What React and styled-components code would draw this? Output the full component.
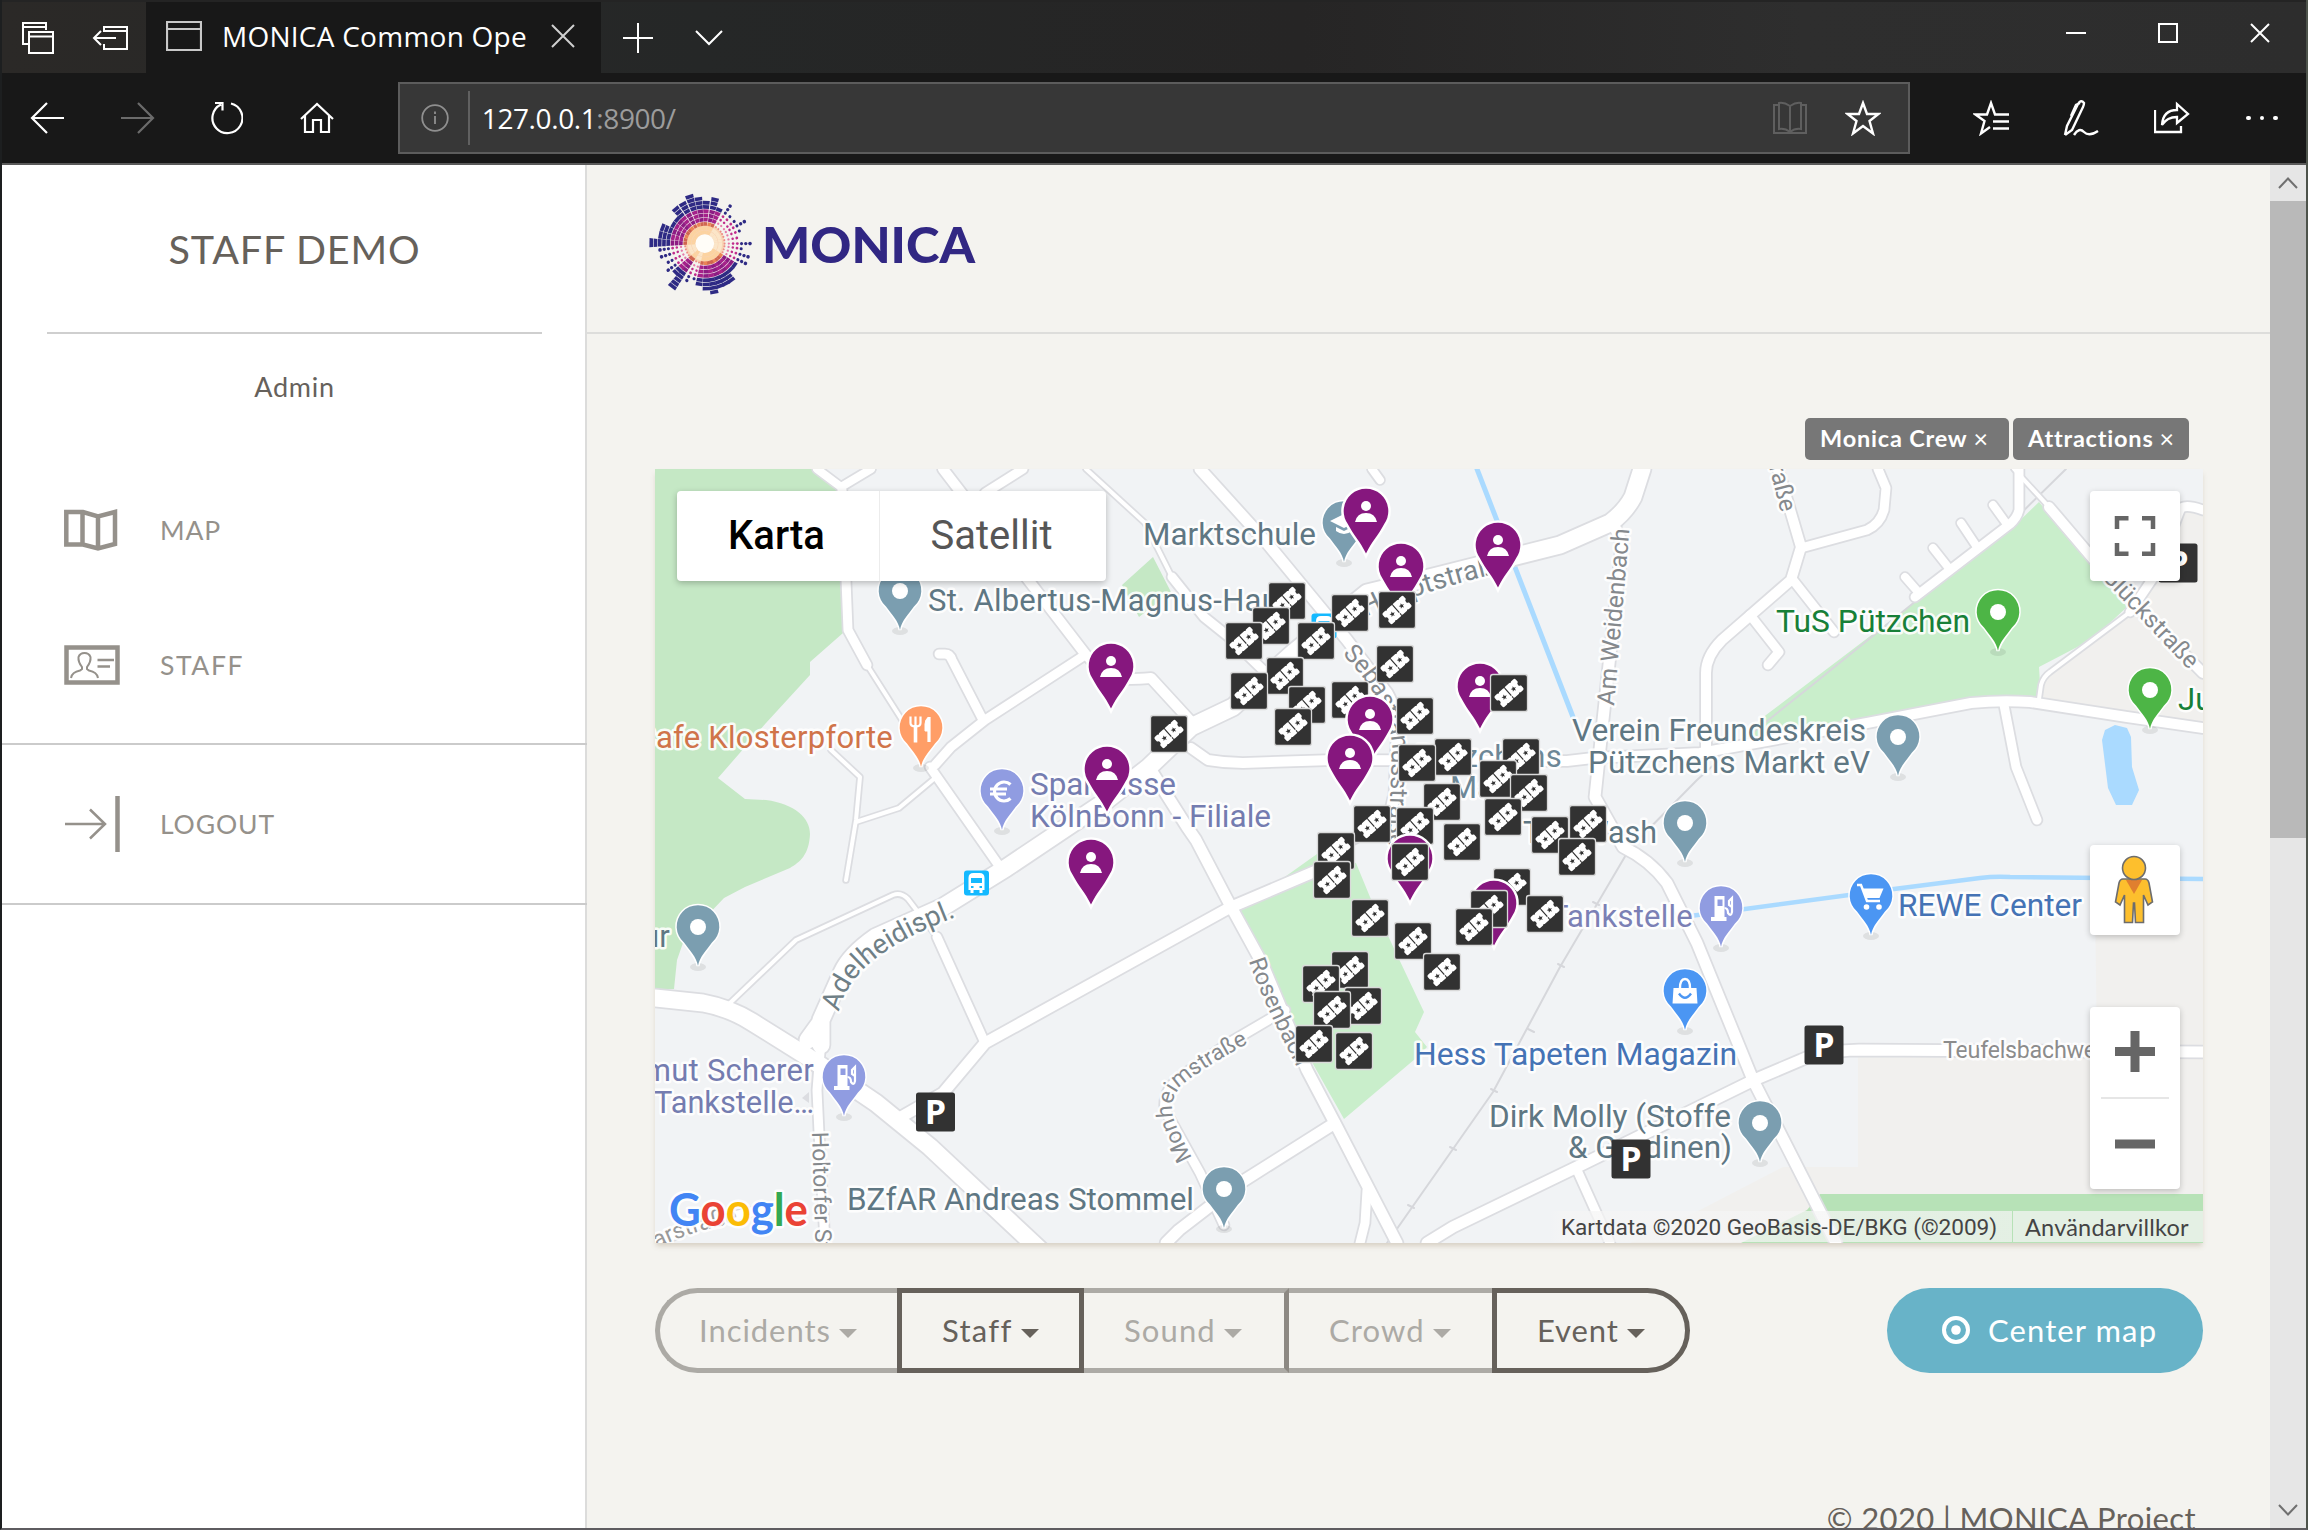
import React from "react";
import styled, { createGlobalStyle } from "styled-components";

const GlobalStyle = createGlobalStyle`
  html, body { margin: 0; padding: 0; background: #1b1c1d; }
  * { box-sizing: border-box; }
  svg { display: block; flex: none; }
`;

const appFont = `Lato, "Open Sans", sans-serif`;
const chromeFont = `"Open Sans", "Noto Sans", sans-serif`;
const mapFont = `Roboto, "Liberation Sans", sans-serif`;

/* ---------- browser window ---------- */

const Window = styled.div`
  width: 2308px;
  height: 1530px;
  overflow: hidden;
  display: flex;
  flex-direction: column;
  border-left: 2px solid #1d1f20;
  border-right: 2px solid #4d534b;
  border-bottom: 2px solid #5e5c60;
  font-family: ${appFont};
`;

const TitleBar = styled.div`
  height: 73px;
  flex: none;
  display: flex;
  background: linear-gradient(90deg, #2b2927 0, #252727 700px, #262525 1300px, #2e2e2e 1800px, #2d2d2d 100%);
  border-top: 2px solid #242424;
`;

const TabActions = styled.div`
  width: 144px;
  display: flex;
  align-items: center;
  gap: 38px;
  padding-left: 20px;
`;

const Tab = styled.div`
  width: 455px;
  display: flex;
  align-items: center;
  padding: 0 0 3px 20px;
  background: #181818;
`;

const TabTitle = styled.div`
  width: 328px;
  margin-left: 20px;
  margin-right: 1px;
  white-space: nowrap;
  color: #fff;
  font: 400 28px/40px ${chromeFont};
  letter-spacing: 0.25px;
`;

const NewTab = styled.div`
  display: flex;
  align-items: center;
  gap: 42px;
  margin-left: 22px;
`;

const WindowButtons = styled.div`
  display: flex;
  gap: 72px;
  margin-left: auto;
  padding: 21px 36px 0 0;
`;

const Toolbar = styled.div`
  height: 92px;
  flex: none;
  display: flex;
  align-items: center;
  background: #181818;
  border-bottom: 2px solid #5a5a5a;
  padding-left: 28px;
`;

const NavButtons = styled.div`
  display: flex;
  align-items: center;
  gap: 56.6px;
`;

const AddressBar = styled.div`
  width: 1512px;
  height: 72px;
  margin-left: 64px;
  display: flex;
  align-items: center;
  background: #373737;
  border: 2px solid #5c5c5c;
  padding: 0 27px 0 21px;
`;

const AddressDivider = styled.div`
  width: 2px;
  height: 54px;
  margin: 0 12px 0 19px;
  background: #606060;
`;

const Url = styled.div`
  flex: 1;
  color: #fff;
  font: 400 28px/40px ${chromeFont};
  letter-spacing: -0.4px;
  span { color: #9c9c9c; }
`;

const AddressIcons = styled.div`
  display: flex;
  align-items: center;
  gap: 38px;
`;

const BrowserTools = styled.div`
  display: flex;
  align-items: center;
  gap: 54.5px;
  margin-left: 63px;
`;

const MoreIcon = styled.div`
  display: flex;
  gap: 9px;
  padding-left: 2px;
`;

const Dot = styled.i`
  width: 4.6px;
  height: 4.6px;
  border-radius: 50%;
  background: #fff;
`;

const Viewport = styled.div`
  flex: 1;
  min-height: 0;
  display: flex;
`;

/* ---------- sidebar ---------- */

const Sidebar = styled.aside`
  width: 585px;
  flex: none;
  background: #fff;
  border-right: 2px solid #dcdcdb;
`;

const SidebarTitle = styled.h1`
  height: 169px;
  margin: 0 43px 0 45px;
  border-bottom: 2px solid #cfcfcf;
  color: #66615b;
  font-weight: 400;
  font-size: 39.5px;
  line-height: 167px;
  text-align: center;
  letter-spacing: 0.8px;
`;

const UserName = styled.div`
  height: 105px;
  margin-bottom: 23px;
  padding-left: 2px;
  color: #66615b;
  font-size: 27px;
  line-height: 105px;
  text-align: center;
  letter-spacing: 0.7px;
`;

const NavItem = styled.a`
  height: ${(p) => p.$height}px;
  margin-bottom: ${(p) => p.$after || 0}px;
  display: flex;
  align-items: center;
  gap: 40px;
  padding-left: 62px;
  color: #95918b;
  font-size: 26.5px;
`;

const NavLabel = styled.span`
  line-height: 34px;
  letter-spacing: ${(p) => p.$track}px;
`;

const Separator = styled.div`
  height: 2px;
  margin-right: -2px;
  background: #cbcbcb;
`;

/* ---------- page ---------- */

const Main = styled.main`
  flex: 1;
  min-width: 0;
  overflow: hidden;
  background: #f4f3ef;
`;

const Header = styled.header`
  height: 169px;
  display: flex;
  align-items: center;
  padding-left: 62px;
  border-bottom: 2px solid #dddddb;
`;

const Content = styled.section`
  padding: 84px 67px 0 68px;
`;

const Tags = styled.div`
  display: flex;
  justify-content: flex-end;
  gap: 4px;
  padding-right: 14px;
  margin-bottom: 9px;
`;

const Tag = styled.div`
  width: ${(p) => p.$width}px;
  height: 42px;
  display: flex;
  gap: 6px;
  padding-left: 15px;
  border-radius: 5px;
  background: #777;
  color: #fff;
  font-weight: 700;
  font-size: 23.5px;
  line-height: 41px;
  white-space: nowrap;
  letter-spacing: 0.8px;
`;

const TagClose = styled.span`
  font-weight: 400;
  font-size: 25px;
`;

const MapFrame = styled.div`
  position: relative;
  width: 1548px;
  height: 774px;
  overflow: hidden;
`;

const MapShadow = styled.div`
  width: 1548px;
  height: 774px;
  box-shadow: 0 4px 5px -1px rgba(150, 130, 100, 0.3);
`;

const MapTypes = styled.div`
  position: absolute;
  left: 22px;
  top: 22px;
  height: 90px;
  display: flex;
  border-radius: 4px;
  background: #fff;
  box-shadow: 0 2px 6px rgba(0, 0, 0, 0.25);
`;

const MapType = styled.button`
  width: ${(p) => p.$width}px;
  padding: 0 3px 0 0;
  border: 0;
  border-left: ${(p) => (p.$divided ? "1px solid #ececec" : "0")};
  background: transparent;
  color: ${(p) => (p.$active ? "#000" : "#565656")};
  font: ${(p) => (p.$active ? 500 : 400)} 40px/90px ${mapFont};
`;

const MapControls = styled.div`
  position: absolute;
  right: 23px;
  top: 22px;
  width: 90px;
`;

const MapControl = styled.div`
  height: ${(p) => p.$height}px;
  margin-bottom: ${(p) => p.$after || 0}px;
  border-radius: 4px;
  background: #fff;
  box-shadow: 0 2px 6px rgba(0, 0, 0, 0.22);
`;

const Attribution = styled.div`
  position: absolute;
  right: 0;
  bottom: 1px;
  height: 31px;
  display: flex;
  color: #444;
  font: 400 22.6px/33px ${mapFont};
  white-space: nowrap;
`;

const Credit = styled.div`
  width: 462px;
  padding-left: 11px;
  background: linear-gradient(90deg, rgba(245, 245, 245, 0), rgba(245, 245, 245, 0.72) 14px);
  letter-spacing: -0.06px;
`;

const Terms = styled.div`
  width: 190px;
  margin-left: 1px;
  padding-left: 12px;
  background: rgba(245, 245, 245, 0.72);
  font-family: ${appFont};
  font-size: 23.5px;
  letter-spacing: 0.2px;
`;

const Actions = styled.div`
  display: flex;
  justify-content: space-between;
  margin-top: 45px;
`;

const Filters = styled.div`
  display: flex;
`;

const Filter = styled.button`
  width: ${(p) => p.$width}px;
  height: 85px;
  display: flex;
  align-items: center;
  gap: 8px;
  padding: 0 0 2px ${(p) => p.$inset}px;
  background: transparent;
  color: ${(p) => (p.$active ? "#66615b" : "#acaaa5")};
  border: 5px solid ${(p) => (p.$active ? "#66615b" : "#acaaa5")};
  border-left-width: ${(p) => (p.$active || p.$first ? 5 : 0)}px;
  border-right-width: ${(p) => (p.$active || p.$divided ? 5 : 0)}px;
  border-right-color: ${(p) => (p.$active ? "#66615b" : "#8d8983")};
  border-radius: ${(p) => (p.$first ? "43px 0 0 43px" : p.$last ? "0 43px 43px 0" : "0")};
  font: 400 31px/40px ${appFont};
  letter-spacing: ${(p) => p.$track}px;
`;

const Caret = styled.i`
  margin-top: 8px;
  border: 9px solid transparent;
  border-top-color: currentColor;
  border-bottom: 0;
`;

const CenterButton = styled.button`
  width: 316px;
  height: 85px;
  display: flex;
  align-items: center;
  gap: 17px;
  padding: 0 0 1px 54px;
  border: 0;
  border-radius: 43px;
  background: #68b3c8;
  color: #fff;
  font: 400 31px/40px ${appFont};
  letter-spacing: 1.1px;
`;

const Footer = styled.footer`
  margin-top: 125px;
  padding-right: 7px;
  color: #66615b;
  font-size: 31px;
  line-height: 40px;
  text-align: right;
  white-space: nowrap;
  letter-spacing: 0.4px;
`;

const Scrollbar = styled.div`
  width: 36px;
  flex: none;
  display: flex;
  flex-direction: column;
  justify-content: space-between;
  background: #e6e6e6;
`;

const ScrollThumb = styled.div`
  height: 637px;
  margin-bottom: auto;
  background: #b9b9b9;
`;

/* ---------- icons ---------- */

const Line = ({ w, h, d, color = "#fff", sw = 2, children }) => (
  <svg width={w} height={h} viewBox={`0 0 ${w} ${h}`} fill="none" stroke={color} strokeWidth={sw}>
    {d && <path d={d} />}
    {children}
  </svg>
);

const TabsIcon = () => <Line w={32} h={32} d="M7 22H1V1H24V8M1 5H24M7 10H31V31H7ZM7 14.500H31" />;
const SetAsideIcon = () => <Line w={36} h={26} d="M12 7V2H35V24H12V19M12 6H35M24 13H2M9 6L2 13L9 20" />;
const PageIcon = () => <Line w={36} h={32} color="#c8c8c8" d="M1 2H35V30H1ZM1 9H35" sw={2.2} />;
const CloseIcon = ({ s = 24, color }) => <Line w={s} h={s} color={color} d={`M1 1L${s - 1} ${s - 1}M${s - 1} 1L1 ${s - 1}`} />;

const STAR = "M18 3L22 14H33.500L24.500 21L28 33.500L18 26L8 33.500L11.500 21L2.500 14H14Z";

/* ---------- logo ---------- */

// [angle clockwise from north, outer radius, drawn as dots]
const RAYS = [
  [-18, 53], [-8, 49], [2, 44], [13, 46], [23, 41], [34, 46, 1], [43, 38, 1], [53, 41, 1], [61, 46, 1],
  [70, 41, 1], [80, 37, 1], [90, 46, 1], [98, 41, 1], [107, 47, 1], [116, 46, 1], [126, 41], [135, 38],
  [144, 47], [152, 47], [160, 46], [169, 52], [178, 48], [188, 43], [197, 38, 1], [206, 42, 1], [217, 55],
  [225, 43], [234, 50, 1], [243, 44, 1], [253, 48, 1], [262, 48, 1], [271, 55], [281, 50], [291, 46],
  [301, 41], [311, 40], [320, 48], [331, 48],
];

const ringColor = (r, dots, i) => {
  if (r < 14) return dots ? "#fbe6c9" : "#fcd3a0";
  if (r < 18) return dots ? "#f8d2b0" : "#f5a074";
  if (r < 22) return dots ? "#ee8f86" : i % 3 ? "#d0664f" : "#ea8455";
  if (r < 32) return dots ? (r > 26 ? "#c02c8c" : "#e67aa8") : i % 2 ? "#8d1c83" : "#a5218a";
  return "#2e2a84";
};

const Burst = () => {
  const parts = [];
  RAYS.forEach(([angle, outer, dots], i) => {
    for (let r = 9.500; r < outer - 2; r += 4.300) {
      const color = ringColor(r, dots, i);
      if (dots && r > 18) {
        parts.push(
          <circle key={`${i}-${r}`} cx={0} cy={-(r + 2)} r={0.500 + r * 0.03} fill={color} transform={`rotate(${angle})`} />
        );
      } else {
        const half = r * 0.08 + 0.1;
        const far = (r + 3.600) * 0.08 + 0.1;
        parts.push(
          <path key={`${i}-${r}`} d={`M${-half} ${-r}L${-far} ${-r - 3.700}H${far}L${half} ${-r}Z`} fill={color} transform={`rotate(${angle})`} />
        );
      }
    }
  });
  return (
    <g transform="translate(704.8 243.6) scale(0.985)">
      <circle r="20" fill="#f9c9a0" opacity="0.75" />
      {parts}
      <circle r="9.500" fill="#fffdf8" />
    </g>
  );
};

const Logo = () => (
  <svg width="330" height="109" viewBox="649 194 330 109" overflow="visible">
    <Burst />
    <text x="762" y="263" fontFamily={appFont} fontWeight="900" fontSize="48.500" fill="#312783" textLength="213" lengthAdjust="spacingAndGlyphs">
      MONICA
    </text>
  </svg>
);

/* ---------- map ---------- */

const ROADS = [
  [8, "M817 469L841 487L871 469M1372 469L1380 480M1993 505L2006 523M1961 523L1977 547M1933 548L1948 567M1905 577L1919 593"],
  [4, "M867 665L921 750M831 750L860 777L856 820L846 880M856 822L899 808L935 778M1086 469L1145 523L1172 577M730 1003L796 940L893 895Q901 892 908 899L937 937M2014 469L2049 507M2039 699L2041 685Q2043 677 2050 672L2130 612"],
  [9, "M842 490L846 580L848 630L867 665M939 654H945Q950 654 952 660L983 720M935 765L951 747L985 720L1082 657M930 767L1002 870M1023 469L985 493M1172 577L1204 617L1229 637L1263 670M937 937L985 1043M1367 1190L1365 1223L1360 1243M1577 1170L1610 1243"],
  [9, "M1285 1010L1229 1043L1183 1075Q1162 1090 1165 1110L1200 1173L1224 1225M1878 469L1886 488L1884 510Q1880 524 1867 530L1801 548M1793 580L1834 632M1750 615L1779 652L1768 665M2004 705L2016 767L2037 820M2019 469V510Q2017 518 2010 524L1915 597M2130 612L2155 575L2180 510Q2183 503 2203 510M821 1040L817 1090L819 1133L825 1243M655 1243L700 1224L760 1210"],
  [10, "M943 469L1036 590L1086 655L1107 675Q1115 681 1151 678L1162 690L1196 727M1191 748L1208 760Q1225 763 1243 763L1333 760L1567 761L1593 758L1700 753L1867 723L1971 703Q2000 700 2030 702L2127 717L2203 728M2049 507L2111 580L2203 673M1778 469L1801 547L1791 580L1722 640Q1706 656 1706 673V750"],
  [11, "M1200 469L1267 543L1347 640L1387 693Q1397 710 1397 740L1395 793L1387 827M1149 767L1187 827L1196 840L1229 903L1263 965L1307 1070L1337 1127L1397 1243M1335 1123L1240 1183L1179 1230L1166 1243M1330 865L1229 908L985 1043L943 1093L901 1117"],
  [11, "M1613 523L1622 543L1613 627L1603 720L1595 797L1623 847Q1650 860 1667 883L1697 943L1753 1080L1836 1243M2203 1052L1859 1050Q1820 1051 1801 1060L1754 1080L1577 1167L1453 1227L1427 1243"],
  [17, "M655 998L703 1003Q730 1008 752 1022L808 1057L876 1103L930 1147L1040 1250M821 1045L821 1020L842 973Q850 955 876 937L943 907L1006 868L1103 803L1149 767L1191 727L1233 707L1293 653L1367 593L1433 577L1560 545L1610 523Q1625 512 1633 497L1642 469M808 1040L821 1022"],
];

const GRAY = "#7b9eb0";
const PURPLE = "#909ce1";
const BLUE = "#4b96f3";
const GREEN = "#4db546";

const PLACES = [
  [900, 591, GRAY], [921, 728, "#ff9e67", "food"], [1002, 791, PURPLE, "euro"], [1344, 523, GRAY, "school"],
  [1998, 612, GREEN], [2150, 690, GREEN], [1898, 737, GRAY], [1685, 823, GRAY], [1721, 908, PURPLE, "fuel"],
  [1685, 991, BLUE, "bag"], [1871, 896, BLUE, "cart"], [1760, 1123, GRAY], [1224, 1189, GRAY],
  [844, 1077, PURPLE, "fuel"], [698, 927, GRAY],
];

const SLATE = "#5f7783";
// text, x, baseline, width (0 = natural), colour, anchor
const LABELS = [
  ["Marktschule", 1143, 545, 173, SLATE],
  ["St. Albertus-Magnus-Haus", 928, 611, 0, SLATE],
  ["Cafe Klosterpforte", 893, 748, 0, "#d0744a", "end"],
  ["Sparkasse", 1030, 795, 146, "#747cb0"],
  ["KölnBonn - Filiale", 1030, 827, 241, "#747cb0"],
  ["TuS Pützchen", 1776, 632, 194, "#188038"],
  ["Ju", 2178, 710, 0, "#188038"],
  ["Verein Freundeskreis", 1572, 741, 294, SLATE],
  ["Pützchens Markt eV", 1588, 773, 282, SLATE],
  ["Pützchens", 1562, 767, 0, "#6d8796", "end"],
  ["Markt", 1450, 798, 0, "#6d8796"],
  ["Top Wash", 1523, 843, 134, SLATE],
  ["Tankstelle", 1693, 927, 0, "#7b80b5", "end"],
  ["Hess Tapeten Magazin", 1414, 1065, 323, "#4573b5"],
  ["Dirk Molly (Stoffe", 1489, 1127, 242, SLATE],
  ["& Gardinen)", 1568, 1158, 164, SLATE],
  ["REWE Center", 1898, 916, 184, "#4573b5"],
  ["BZfAR Andreas Stommel", 847, 1210, 347, SLATE],
  ["Helmut Scherer", 814, 1081, 0, "#747cb0", "end"],
  ["Tankstelle…", 654, 1113, 160, "#747cb0"],
  ["ur", 670, 947, 0, SLATE, "end"],
];

const STREETS = [
  ["adelheid", "Adelheidispl.", 27.500, "M839 1012C848 975 878 946 961 915", "#6f7f86"],
  ["haupt", "Hauptstraße", 27.500, "M1366 617Q1404 596 1510 570", "#7c878d"],
  ["weiden", "Am Weidenbach", 24.500, "M1614 706L1629 535", "#85898d"],
  ["sebastian", "Sebastianusstraße", 25, "M1342 654Q1388 700 1392 745L1388 860", "#85898d"],
  ["rosen", "Rosenbach", 23.500, "M1249 961Q1265 1010 1320 1110", "#85898d"],
  ["monheim", "Monheimstraße", 22.500, "M1192 1158L1176 1125Q1166 1102 1182 1085Q1200 1070 1245 1045", "#85898d"],
  ["holtorf", "Holtorfer Straße", 23, "M812 1132L818 1330", "#85898d"],
  ["nahar", "aarstraße", 23, "M646 1254Q690 1228 760 1219", "#999"],
  ["glueck", "Glückstraße", 24, "M2101 577L2208 690", "#85898d"],
  ["north", "straße", 24, "M1764 447L1788 540", "#85898d"],
];

const STAFF = [
  [1366, 554], [1401, 609], [1498, 588], [1480, 729], [1370, 762], [1350, 801],
  [1111, 709], [1107, 812], [1091, 905], [1410, 901], [1494, 946],
];

const TICKETS = [
  [1287, 601], [1271, 626], [1244, 641], [1316, 641], [1350, 613], [1397, 610], [1395, 664], [1285, 676],
  [1249, 691], [1307, 705], [1293, 727], [1350, 700], [1415, 716], [1509, 693], [1453, 757], [1417, 763],
  [1521, 757], [1498, 779], [1529, 793], [1442, 802], [1503, 817], [1372, 824], [1415, 826], [1462, 842],
  [1550, 835], [1588, 824], [1336, 851], [1332, 880], [1410, 862], [1577, 857], [1512, 887], [1489, 909],
  [1474, 927], [1545, 914], [1370, 918], [1413, 941], [1442, 972], [1350, 970], [1321, 984], [1363, 1006],
  [1332, 1010], [1314, 1044], [1354, 1051], [1169, 734],
];

const PARKING = [[935.5, 1112], [1824, 1045], [1631, 1159], [2178, 563]];

const MARKERS = [
  ...STAFF.map(([x, y]) => ({ x, y: y - 43, staff: true })),
  ...TICKETS.map(([x, y]) => ({ x, y })),
].sort((a, b) => a.y - b.y);

const Glyph = ({ kind, color }) => {
  switch (kind) {
    case "food":
      return (
        <g stroke="#fff" strokeWidth="3" fill="#fff">
          <path d="M-5.500 -3V14.500" strokeWidth="3.600" />
          <path d="M-10.500 -11.500V-5Q-10.500 -1.500 -5.500 -1.500T-0.500 -5V-11.500M-5.500 -11.500V-2" fill="none" strokeWidth="2.200" />
          <path d="M8 -11V14" strokeWidth="3.200" />
          <path d="M8 -11Q4 -9 4 -4V3H8Z" strokeWidth="1" />
        </g>
      );
    case "euro":
      return (
        <g stroke="#fff" strokeWidth="3.200" fill="none">
          <path d="M8.500 -6.500A9.500 9.500 0 1 0 8.500 7.500M-12 -2H5M-12 3H4" />
        </g>
      );
    case "school":
      return <path d="M-14 -2L0 -9L14 -2L0 5ZM-8 4V8Q0 14 8 8V4L0 8Z" fill="#fff" />;
    case "fuel":
      return (
        <g>
          <path d="M-6.500 -12H3.500V9H5.500V13H-10V9H-6.500Z" fill="#fff" />
          <rect x="-3.500" y="-8.500" width="5" height="6.500" fill={color} />
          <path d="M3.500 0Q7 0 7 5Q10 9 11 4V-10L8 -7V-3L11 -1" fill="none" stroke="#fff" strokeWidth="2.200" />
        </g>
      );
    case "bag":
      return (
        <g>
          <path d="M-11.500 -3H11.500L12.500 12.500H-12.500Z" fill="#fff" />
          <path d="M-5 -3Q-5 -12 0 -12T5 -3" fill="none" stroke="#fff" strokeWidth="2.400" />
          <path d="M-6 2.500Q0 11 6 2.500" fill="none" stroke={color} strokeWidth="2.400" />
        </g>
      );
    case "cart":
      return (
        <g fill="#fff">
          <path d="M-14 -11H-10L-4 5H9" fill="none" stroke="#fff" strokeWidth="2.400" />
          <path d="M-9 -7.500H12.500L8.500 2H-5Z" />
          <circle cx="-4.500" cy="11" r="2.800" />
          <circle cx="8" cy="11" r="2.800" />
        </g>
      );
    default:
      return <circle r="8" fill="#fff" />;
  }
};

const Place = ({ x, y, color, kind }) => (
  <g transform={`translate(${x} ${y})`}>
    <ellipse cx="0" cy="40" rx="8" ry="4" fill="#000" opacity="0.08" />
    <path
      d="M0 39C-1.500 30 -8 24 -14 15.500A21.300 21.300 0 1 1 14 15.500C8 24 1.500 30 0 39Z"
      fill={color} stroke="#fff" strokeWidth="3" paintOrder="stroke"
    />
    <Glyph kind={kind} color={color} />
  </g>
);

const StaffPin = ({ x, y }) => (
  <g transform={`translate(${x} ${y})`}>
    <path
      d="M0 42.500C-6 30 -12 25 -18.500 12.500A22.300 22.300 0 1 1 18.500 12.500C12 25 6 30 0 42.500Z"
      fill="#86177e" stroke="#fff" strokeWidth="5" paintOrder="stroke"
    />
    <circle cy="-5" r="5" fill="#fff" />
    <path d="M-11 11Q-9 2 0 2T11 11Z" fill="#fff" />
  </g>
);

const Star = ({ x }) => (
  <path
    transform={`translate(${x} 0) rotate(20)`} fill="#323232"
    d="M0 -2.800L0.800 -0.900L2.800 -0.800L1.200 0.500L1.700 2.400L0 1.300L-1.700 2.400L-1.200 0.500L-2.800 -0.800L-0.800 -0.900Z"
  />
);

const TicketMarker = ({ x, y }) => (
  <g transform={`translate(${x} ${y})`}>
    <rect x="-18.500" y="-18.500" width="37" height="37" rx="2.500" fill="#323232" stroke="#d9d9d9" strokeWidth="1.300" />
    <g transform="rotate(-42)">
      <rect x="-14" y="-7.300" width="28" height="14.600" rx="1.800" fill="#fff" />
      <path d="M0 -6.500V6.500" stroke="#323232" strokeWidth="1.200" strokeDasharray="10 1" />
      <Star x={-6.200} />
      <Star x={6.200} />
      <g fill="#323232">
        <circle cx="-14.500" r="2.400" />
        <circle cx="14.500" r="2.400" />
        {[-8, 0, 8].map((n) => (
          <g key={n}>
            <circle cx={n} cy="-7.600" r="1" />
            <circle cx={n} cy="7.600" r="1" />
          </g>
        ))}
      </g>
    </g>
  </g>
);

const BusStop = ({ x, y }) => (
  <g transform={`translate(${x} ${y})`}>
    <rect x="-12.500" y="-12.500" width="25" height="25" rx="3" fill="#14b9ff" />
    <path d="M-8 -5Q-8 -10 -3 -10H3Q8 -10 8 -5V7H6V10H3V7H-3V10H-6V7H-8Z" fill="#fff" />
    <path d="M-5.500 -5H5.500V0H-5.500ZM-5.500 3H-3V5H-5.500ZM3 3H5.500V5H3Z" fill="#14b9ff" />
  </g>
);

const halo = { stroke: "#fff", strokeWidth: 5, strokeOpacity: 0.9, paintOrder: "stroke", strokeLinejoin: "round" };

const CityMap = () => (
  <svg width="1548" height="774" viewBox="655 469 1548 774" fontFamily={mapFont}>
    <rect x="655" y="469" width="1548" height="774" fill="#f1f3f5" />
    <path fill="#f1f0ee" d="M2041 697L2045 680L2142 600L2185 503H2203V728ZM2095 900H2203V1243H1630L1700 1210L1783 1167H1858V1050H2097Z" />
    <path fill="#c5e8c5" d="M655 469H815L838 487L842 580L843 633L810 662V675L766 723L718 778L745 799L766 800C795 804 810 818 810 834C809 855 800 862 790 868L745 887L724 898L684 940L677 960L674 989H655ZM1153 557L1171 592L1139 617L1122 585Z" />
    <path fill="#c9eecb" d="M1240 909L1317 854L1356 863L1370 897L1390 940L1424 1012L1415 1032L1427 1047L1415 1059L1344 1119L1273 993ZM2039 502L2127 607L2099 633L2085 643L2039 667L2041 700L1971 700L1762 740L1739 741L1766 715L2010 530Z" />
    <path fill="#b7e2b7" d="M1820 1194H2203V1243H1741L1807 1210Z" />
    <path fill="#aadaff" d="M2115 725L2127 728L2131 737L2132 767L2139 790L2132 805H2116L2108 788L2102 740L2105 730Z" />
    <g fill="none" strokeLinecap="round" strokeLinejoin="round">
      <path d="M1477 469L1573 717" stroke="#aadaff" strokeWidth="5" />
      <path d="M1690 916L1745 909L1894 889L1980 878Q1995 876 2010 877L2203 879" stroke="#aadaff" strokeWidth="4.500" />
      <path d="M1397 823L1320 862M2066 469L2006 528L1816 682L1727 753L1697 780L1630 848L1560 967L1493 1092L1387 1243" stroke="#d6d7db" strokeWidth="2" />
      <path d="M1593 902L1599 905M1558 964L1564 967M1528 1029L1534 1032M1491 1089L1497 1092M1450 1147L1456 1150M1408 1205L1414 1208" stroke="#d6d7db" strokeWidth="2" />
      {ROADS.map(([w, d], i) => <path key={i} d={d} stroke="#dcdde1" strokeWidth={w + 3.500} />)}
      {ROADS.map(([w, d], i) => <path key={i} d={d} stroke="#fff" strokeWidth={w} />)}
    </g>
    <path d="M802 1098L809 1092V1103Z" fill="#dcdde1" />
    <defs>
      {STREETS.map(([id, , , d]) => <path key={id} id={id} d={d} />)}
    </defs>
    {STREETS.map(([id, text, size, , color]) => (
      <text key={id} fontSize={size} fill={color} {...halo}>
        <textPath href={`#${id}`}>{text}</textPath>
      </text>
    ))}
    <text x="1943" y="1058" fontSize="23.500" fill="#8c8c8c" textLength="166" {...halo}>Teufelsbachweg</text>
    <BusStop x={976.500} y={883} />
    <BusStop x={1324} y={626} />
    {LABELS.map(([text, x, y, width, color, anchor]) => (
      <text key={text + y} x={x} y={y} fontSize="31" fill={color} textAnchor={anchor || "start"}
        {...(width ? { textLength: width, lengthAdjust: "spacingAndGlyphs" } : { letterSpacing: 0.25 })} {...halo}>
        {text}
      </text>
    ))}
    {PLACES.map(([x, y, color, kind]) => <Place key={`${x}-${y}`} x={x} y={y} color={color} kind={kind} />)}
    {MARKERS.map((m) => (m.staff
      ? <StaffPin key={`s${m.x}`} x={m.x} y={m.y} />
      : <TicketMarker key={`t${m.x}-${m.y}`} x={m.x} y={m.y} />))}
    {PARKING.map(([x, y]) => (
      <g key={x} transform={`translate(${x} ${y})`}>
        <rect x="-19.500" y="-19.500" width="39" height="39" rx="2.500" fill="#323232" />
        <text y="12" fontFamily="Open Sans, sans-serif" fontWeight="700" fontSize="34" fill="#fff" textAnchor="middle">P</text>
      </g>
    ))}
    <text x="669" y="1226" fontFamily={appFont} fontWeight="700" fontSize="46" textLength="139" lengthAdjust="spacingAndGlyphs" {...halo}>
      <tspan fill="#4285f4">G</tspan><tspan fill="#ea4335">o</tspan><tspan fill="#fbbc05">o</tspan><tspan fill="#4285f4">g</tspan><tspan fill="#34a853">l</tspan><tspan fill="#ea4335">e</tspan>
    </text>
  </svg>
);

const FILTERS = [
  { label: "Incidents", $width: 242, $inset: 39, $track: 0.95, $first: true },
  { label: "Staff", $width: 187, $inset: 40, $track: 1.3, $active: true },
  { label: "Sound", $width: 205, $inset: 40, $track: 1.1, $divided: true },
  { label: "Crowd", $width: 203, $inset: 40, $track: 1.1 },
  { label: "Event", $width: 198, $inset: 40, $track: 0.9, $active: true, $last: true },
];

export default function App() {
  return (
    <Window>
      <GlobalStyle />
      <TitleBar>
        <TabActions>
          <TabsIcon />
          <SetAsideIcon />
        </TabActions>
        <Tab>
          <PageIcon />
          <TabTitle>MONICA Common Ope</TabTitle>
          <CloseIcon color="#d0d0d0" />
        </Tab>
        <NewTab>
          <Line w={30} h={30} d="M15 0V30M0 15H30" />
          <Line w={28} h={16} d="M1 1L14 14L27 1" />
        </NewTab>
        <WindowButtons>
          <Line w={20} h={20} d="M0 10H20" />
          <Line w={20} h={20} d="M1 1H19V19H1Z" />
          <CloseIcon s={20} />
        </WindowButtons>
      </TitleBar>
      <Toolbar>
        <NavButtons>
          <Line w={34} h={32} d="M34 16H2M17 1L2 16L17 31" sw={2.200} />
          <Line w={34} h={32} d="M0 16H32M17 1L32 16L17 31" color="#6b6b6b" sw={2.200} />
          <Line w={32} h={34} d="M20 2.500A15 15 0 1 1 10 3.500M4 2H11.500V9.500" sw={2.200} />
          <Line w={34} h={32} d="M1 17L17 2L33 17M5 13V30H13V18H21V30H29V13" sw={2.200} />
        </NavButtons>
        <AddressBar>
          <Line w={28} h={28} color="#8f8f8f" sw={1.800}>
            <circle cx="14" cy="14" r="12.800" />
            <path d="M14 12V20M14 7.500V10" />
          </Line>
          <AddressDivider />
          <Url>127.0.0.1<span>:8900/</span></Url>
          <AddressIcons>
            <Line w={34} h={34} color="#5f5f5f" d="M6 4H1V32H33V4H28M17 5Q11 1 6 2V28Q12 27 17 31Q22 27 28 28V2Q23 1 17 5V31" />
            <Line w={36} h={36} d={STAR} sw={2.400} />
          </AddressIcons>
        </AddressBar>
        <BrowserTools>
          <Line w={36} h={36} sw={2.400} d="M36 14.500H22L18 3L14 14.500H2.500L11.500 21L8 33.500L17 27M20 21.500H36M20 28.500H36" />
          <Line w={36} h={37} d="M2 35L4 26L15 4Q18 -1 21 3Q21 5 20 7L9 30L2 35M8 16L13 5L17 3M11 35Q16 27 21 32T35 31" sw={2.400} />
          <Line w={36} h={34} d="M1 9V31H27V25M8 24Q9 9 23 9V3L34 13L23 22V16Q13 16 8 24Z" sw={2.300} />
          <MoreIcon><Dot /><Dot /><Dot /></MoreIcon>
        </BrowserTools>
      </Toolbar>
      <Viewport>
        <Sidebar>
          <SidebarTitle>STAFF DEMO</SidebarTitle>
          <UserName>Admin</UserName>
          <NavItem $height={135}>
            <Line w={56} h={42} color="#95918b" sw={4.500} d="M2.300 3V35.500H19L34 39.500L51 35V3L34 7.500L19 3ZM18.500 3V36M34 7V39" />
            <NavLabel $track={0.9}>MAP</NavLabel>
          </NavItem>
          <NavItem $height={135} $after={11}>
            <Line w={56} h={40} color="#95918b" sw={4.500}>
              <path d="M2.500 2.500H53.500V37.500H2.500Z" />
              <path d="M7 33Q8 27 16 25.500L18 24V22Q14 17 14.500 12Q16 8 20.500 8T26.500 12Q27 17 23 22V24L25 25.500Q33 27 34 33" strokeWidth="2" />
              <path d="M33.500 15H50M33.500 21.500H46" strokeWidth="2.400" />
            </Line>
            <NavLabel $track={1.6}>STAFF</NavLabel>
          </NavItem>
          <Separator />
          <NavItem $height={158}>
            <Line w={56} h={58} color="#95918b" sw={2.500}>
              <path d="M1 29H41M26 14.500L41 29L26 43.500" />
              <path d="M53.500 1V57" strokeWidth="4.500" />
            </Line>
            <NavLabel $track={0.9}>LOGOUT</NavLabel>
          </NavItem>
          <Separator />
        </Sidebar>
        <Main>
          <Header>
            <Logo />
          </Header>
          <Content>
            <Tags>
              <Tag $width={204}>Monica Crew<TagClose>×</TagClose></Tag>
              <Tag $width={176}>Attractions<TagClose>×</TagClose></Tag>
            </Tags>
            <MapShadow>
              <MapFrame>
                <CityMap />
                <MapTypes>
                  <MapType $width={202} $active>Karta</MapType>
                  <MapType $width={227} $divided>Satellit</MapType>
                </MapTypes>
                <MapControls>
                  <MapControl $height={90} $after={264}>
                    <Line w={90} h={90} color="#666" sw={4.500} d="M27 38V27.300H38.500M52 27.300H63V38M63 52V62.700H52M38.500 62.700H27V52" />
                  </MapControl>
                  <MapControl $height={90} $after={72}>
                    <Line w={90} h={90} color="#6d6d6d" sw={1.600}>
                      <path fill="#fdbf2d" d="M33 34H55Q58 34 59 38L62.500 57L58 60L53.500 50V77.500H45.500L44.500 58H43.500L42.500 77.500H34.500V50L30 60L25.500 57L29 38Q30 34 33 34Z" />
                      <path fill="#e07f2f" stroke="none" d="M36 35H52L44 49Z" />
                      <circle cx="44" cy="23" r="11.500" fill="#fdbf2d" />
                    </Line>
                  </MapControl>
                  <MapControl $height={182}>
                    <Line w={90} h={182} color="#666" sw={9}>
                      <path d="M25 44.500H65M45 24V65M25 137H65" />
                      <path d="M11 91H79" stroke="#e6e6e6" strokeWidth="2" />
                    </Line>
                  </MapControl>
                </MapControls>
                <Attribution>
                  <Credit>Kartdata ©2020 GeoBasis-DE/BKG (©2009)</Credit>
                  <Terms>Användarvillkor</Terms>
                </Attribution>
              </MapFrame>
            </MapShadow>
            <Actions>
              <Filters>
                {FILTERS.map(({ label, ...look }) => (
                  <Filter key={label} {...look}>{label}<Caret /></Filter>
                ))}
              </Filters>
              <CenterButton>
                <Line w={30} h={30} sw={4}>
                  <circle cx="15" cy="15" r="12" />
                  <circle cx="15" cy="15" r="4.800" fill="#fff" stroke="none" />
                </Line>
                Center map
              </CenterButton>
            </Actions>
            <Footer>© 2020 | MONICA Project</Footer>
          </Content>
        </Main>
        <Scrollbar>
          <Line w={36} h={36} color="#707070" d="M9 23L18 13.500L27 23" />
          <ScrollThumb />
          <Line w={36} h={36} color="#707070" d="M9 13L18 22.500L27 13" />
        </Scrollbar>
      </Viewport>
    </Window>
  );
}
